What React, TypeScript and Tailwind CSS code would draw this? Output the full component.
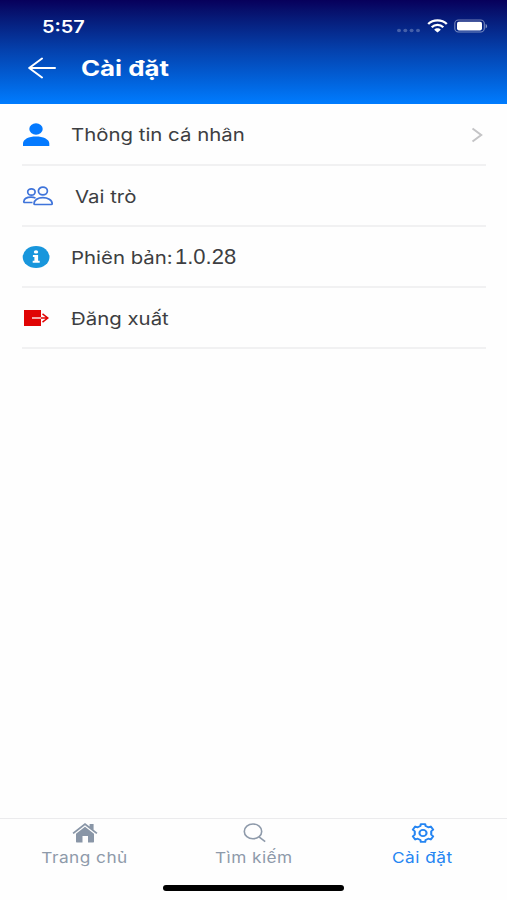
import type { ReactNode } from 'react';

function StatusBar() {
  return (
    <div className="flex h-[44px] items-start pt-[14px] pl-[42px] pr-[19px] text-white">
      <span className="inline-block h-[24px] origin-left scale-x-[1.17] pt-px text-[17px] leading-[25px] font-semibold">5:57</span>
      <div className="mt-[5px] ml-auto flex items-start">
        <svg className="mt-[9px]" width="26" height="5" viewBox="0 0 26 5" fill="#fff" opacity=".25">
          <ellipse cx="3" cy="2.5" rx="2" ry="1.8" />
          <ellipse cx="9.3" cy="2.5" rx="2" ry="1.8" />
          <ellipse cx="15.6" cy="2.5" rx="2" ry="1.8" />
          <ellipse cx="22" cy="2.5" rx="2" ry="1.8" />
        </svg>
        <svg className="ml-[5px]" width="21" height="14" viewBox="0 0 21 14" fill="none" stroke="#fff">
          <path d="M1.2 5C6.2 .1 14.8 .1 19.8 5" strokeWidth="2.4" />
          <path d="M4.7 8.3C7.9 5.1 13.1 5.1 16.3 8.3" strokeWidth="2.3" />
          <path d="M7.2 10.7C9 8.8 12 8.8 13.8 10.7L10.5 13.6Z" fill="#fff" stroke="none" />
        </svg>
        <svg className="ml-[6px]" width="34" height="14" viewBox="0 0 34 14" fill="none">
          <rect x=".8" y="1" width="29.5" height="12" rx="3.6" stroke="#fff" strokeOpacity=".45" strokeWidth="1.1" />
          <rect x="3" y="2.7" width="25" height="8.7" rx="1.8" fill="#fff" />
          <path d="M31.6 5v4.4c2-.7 2-3.7 0-4.4Z" fill="#fff" fillOpacity=".5" />
        </svg>
      </div>
    </div>
  );
}

function Row({ icon, children, trailing }: { icon: ReactNode; children: ReactNode; trailing?: ReactNode }) {
  return (
    <li className="flex h-[61px] items-center border-b-2 border-[#f1f1f2]">
      <span className="flex w-[49px] shrink-0 items-center">{icon}</span>
      <div className="flex flex-1 items-center whitespace-nowrap">{children}</div>
      {trailing}
    </li>
  );
}

function PersonIcon() {
  return (
    <svg width="30" height="24" viewBox="0 0 30 24" fill="#047aff">
      <ellipse cx="14" cy="6" rx="6.7" ry="5.7" />
      <path d="M1 23v-2.5C1 16 7 13.4 14 13.4S27.3 16 27.3 20.5V23Z" />
    </svg>
  );
}

function GroupIcon() {
  return (
    <svg width="32" height="20" viewBox="0 0 32 20" fill="none" stroke="#3f74da" strokeWidth="1.7">
      <ellipse cx="9.4" cy="6" rx="3.7" ry="3.2" />
      <ellipse cx="20.9" cy="5" rx="4.5" ry="3.9" />
      <path d="M12 17.7c0-3.8 4-6 8.8-6s9.4 2.2 9.4 6c0 .6-.3.8-1 .8H13c-.7 0-1-.2-1-.8Z" />
      <path d="M10.5 16.5H2.7c-.8 0-1-.4-.9-1C2.2 12.6 5.4 11.2 9 11.2c1.700 0 3.200.3 4.500.8" />
    </svg>
  );
}

function InfoIcon() {
  return (
    <svg width="30" height="24" viewBox="0 0 30 24">
      <ellipse cx="14.1" cy="12" rx="13.4" ry="11.1" fill="#1896dc" />
      <ellipse cx="14" cy="6.9" rx="2.2" ry="1.7" fill="#fff" />
      <path d="M10.9 9.9h5.2v5.9h1.6v2h-7v-2h1.7v-3.9h-1.5Z" fill="#fff" />
    </svg>
  );
}

function LogoutIcon() {
  return (
    <svg width="30" height="18" viewBox="0 0 30 18" fill="none">
      <path d="M2 1h17v16H2Z" fill="#e00404" />
      <path d="M10 9h9" stroke="#fff" strokeWidth="1.3" />
      <path d="M19 9h7M20.5 4.8 25.8 9l-5.3 4.2" stroke="#e00404" strokeWidth="1.5" />
    </svg>
  );
}

function HomeIcon() {
  return (
    <svg className="ml-px" width="26" height="22" viewBox="0 0 26 22" fill="#8996a7">
      <path d="M.5 10.7 13 1l4.600 3.600V2h4v5.700l3.900 3-1.200 1.200L13 3.200 1.700 11.900Z" />
      <path d="m13 4.700 9 7.100v7.700c0 .6-.4 1-1 1h-5v-6.400h-5.500v6.400H5c-.6 0-1-.4-1-1v-7.700Z" />
    </svg>
  );
}

function SearchIcon() {
  return (
    <svg width="26" height="22" viewBox="0 0 26 22" fill="none" stroke="#8e9aaa" strokeWidth="1.6">
      <ellipse cx="12" cy="9.4" rx="8.7" ry="7.4" />
      <path d="m18 14.800 6.200 4.900" />
    </svg>
  );
}

function GearIcon() {
  return (
    <svg width="26" height="22" viewBox="0 0 24 24" preserveAspectRatio="none" fill="none" stroke="#2585f2" strokeWidth="1.9" strokeLinejoin="round">
      <path d="M9.600 4.400 10 2.200h4l.4 2.200 2.500 1.400 2.300-.9 2.200 3.400-1.800 1.800v3.800l1.800 1.800-2.200 3.400-2.300-.9-2.500 1.400-.4 2.200h-4l-.4-2.200-2.500-1.400-2.300.9-2.200-3.400 1.800-1.800v-3.800L2.600 8.300l2.200-3.400 2.300.9Z" />
      <ellipse cx="12" cy="12" rx="3.3" ry="3.5" />
    </svg>
  );
}

function Tab({ icon, children, active = false }: { icon: ReactNode; children: ReactNode; active?: boolean }) {
  return (
    <button className={`flex flex-1 flex-col items-center pt-[3px] ${active ? 'text-[#2585f2]' : 'text-[#8e9aaa]'}`}>
      {icon}
      <span className="mt-[3px] inline-block scale-x-[1.15] text-[15px] leading-[22px] tracking-[0.4px] whitespace-nowrap">{children}</span>
    </button>
  );
}

export default function App() {
  return (
    <main className="flex h-[900px] w-[507px] flex-col overflow-hidden bg-[#fefefe] font-['Inter','Liberation_Sans',sans-serif] text-[#3d3e42]">
      <header className="h-[104px] shrink-0 bg-linear-to-b from-[#07005b] via-[#0443b0] to-[#007cff]">
        <StatusBar />
        <div className="flex h-[48px] items-center pl-[28px] text-white">
          <svg width="28" height="22" viewBox="0 0 28 22" fill="none" stroke="#fff" strokeWidth="2" strokeLinecap="round" strokeLinejoin="round">
            <path d="M27 11H1.200M14 1.500 1.200 11 14 20.500" />
          </svg>
          <h1 className="ml-[25px] origin-left scale-x-[1.23] pt-px text-[21px] leading-[28px] font-bold">Cài đặt</h1>
        </div>
      </header>
      <ul className="mt-px mr-[21px] ml-[22px] text-[17.5px]">
        <Row
          icon={<PersonIcon />}
          trailing={
            <svg className="mr-[3px]" width="12" height="16" viewBox="0 0 12 16" fill="none" stroke="#c4c4c6" strokeWidth="2">
              <path d="m1.500 1.500 8.700 6.500-8.700 6.500" />
            </svg>
          }
        >
          <span className="inline-block origin-left scale-x-[1.165] pt-[2px]">Thông tin cá nhân</span>
        </Row>
        <Row icon={<GroupIcon />}>
          <span className="ml-[4px] inline-block origin-left scale-x-[1.165] pt-[3px]">Vai trò</span>
        </Row>
        <Row icon={<InfoIcon />}>
          <span className="inline-block w-[104px]"><span className="inline-block origin-left scale-x-[1.165] pt-[3px]">Phiên bản:</span></span>
          <span className="font-['Liberation_Sans',sans-serif] text-[22px] leading-[26px]">1.0.28</span>
        </Row>
        <Row icon={<LogoutIcon />}>
          <span className="inline-block origin-left scale-x-[1.165] pt-[3px]">Đăng xuất</span>
        </Row>
      </ul>
      <footer className="mt-auto h-[82px] shrink-0 border-t border-[#ebebed]">
        <nav className="flex h-[66px]">
          <Tab icon={<HomeIcon />}>Trang chủ</Tab>
          <Tab icon={<SearchIcon />}>Tìm kiếm</Tab>
          <Tab icon={<GearIcon />} active>Cài đặt</Tab>
        </nav>
        <div className="mx-auto h-[6px] w-[181px] rounded-full bg-black" />
      </footer>
    </main>
  );
}
